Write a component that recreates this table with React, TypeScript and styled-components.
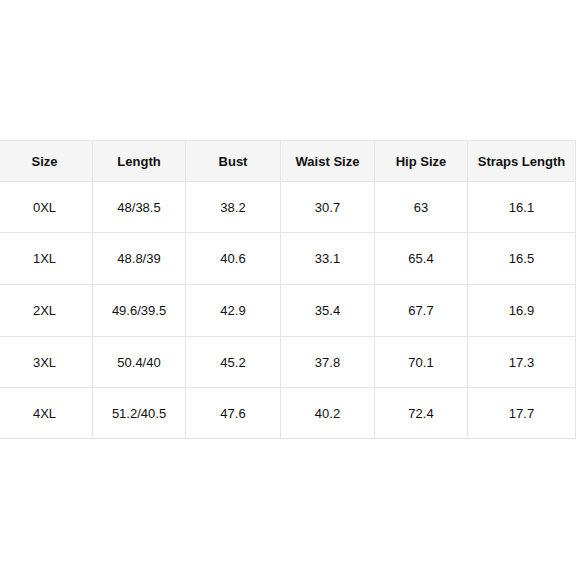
import React from "react";
import styled, { createGlobalStyle } from "styled-components";

const Global = createGlobalStyle`
  html, body { margin: 0; padding: 0; background: #fff; }
  body { font-family: "Liberation Sans", Arial, sans-serif; }
`;

const Page = styled.div`
  width: 580px;
  height: 580px;
  padding-top: 140px;
  box-sizing: border-box;
  overflow: hidden;
`;

const Table = styled.table`
  border-collapse: collapse;
  table-layout: fixed;
  margin-left: -4px;
  width: 580px;
  color: #111;
  font-size: 13px;
`;

const Col = styled.col<{ $w: number }>`
  width: ${(p) => p.$w}px;
`;

const HeadRow = styled.tr`
  height: 41px;
  background: #f5f5f5;
`;

const Row = styled.tr<{ $h: number }>`
  height: ${(p) => p.$h}px;
`;

const Th = styled.th`
  border: 1px solid #e4e4e4;
  font-weight: bold;
  text-align: center;
  padding: 0;
`;

const Td = styled.td`
  border: 1px solid #e4e4e4;
  text-align: center;
  padding: 0;
`;

const widths = [96, 93, 95, 94, 93, 108];
const heads = ["Size", "Length", "Bust", "Waist Size", "Hip Size", "Straps Length"];
const rows = [
  ["0XL", "48/38.5", "38.2", "30.7", "63", "16.1"],
  ["1XL", "48.8/39", "40.6", "33.1", "65.4", "16.5"],
  ["2XL", "49.6/39.5", "42.9", "35.4", "67.7", "16.9"],
  ["3XL", "50.4/40", "45.2", "37.8", "70.1", "17.3"],
  ["4XL", "51.2/40.5", "47.6", "40.2", "72.4", "17.7"],
];
const heights = [51, 52, 52, 51, 51];

export default function App() {
  return (
    <Page>
      <Global />
      <Table>
        <colgroup>
          {widths.map((w, i) => (
            <Col key={i} $w={w} />
          ))}
        </colgroup>
        <thead>
          <HeadRow>
            {heads.map((h) => (
              <Th key={h}>{h}</Th>
            ))}
          </HeadRow>
        </thead>
        <tbody>
          {rows.map((r, i) => (
            <Row key={i} $h={heights[i]}>
              {r.map((c, j) => (
                <Td key={j}>{c}</Td>
              ))}
            </Row>
          ))}
        </tbody>
      </Table>
    </Page>
  );
}
